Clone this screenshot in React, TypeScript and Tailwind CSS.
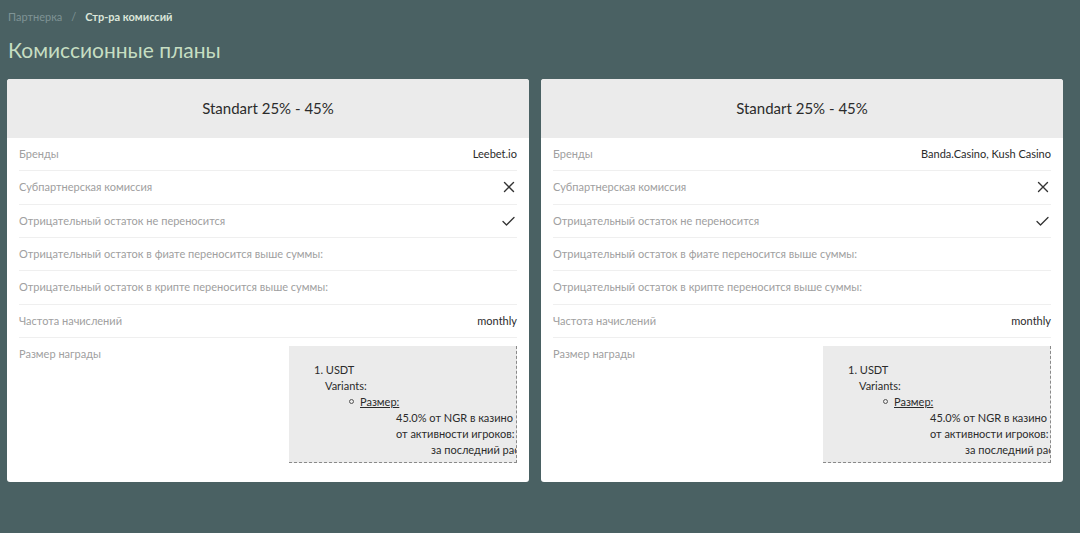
import React from "react";

const rows = (brand: string) => [
  { label: "Бренды", value: <span className="text-[#2b2b2b]">{brand}</span> },
  { label: "Субпартнерская комиссия", value: <XIcon /> },
  { label: "Отрицательный остаток не переносится", value: <CheckIcon /> },
  { label: "Отрицательный остаток в фиате переносится выше суммы:", value: null },
  { label: "Отрицательный остаток в крипте переносится выше суммы:", value: null },
  { label: "Частота начислений", value: <span className="text-[#2b2b2b]">monthly</span> },
];

function XIcon() {
  return (
    <svg width="12" height="12" viewBox="0 0 12 12" className="mr-[2px]">
      <path d="M1.5 1.5 L10.5 10.5 M10.5 1.5 L1.5 10.5" stroke="#333" strokeWidth="1.4" strokeLinecap="round" />
    </svg>
  );
}

function CheckIcon() {
  return (
    <svg width="13" height="10" viewBox="0 0 13 10" className="mr-[2px]">
      <path d="M1 5.5 L4.5 9 L12 1.5" stroke="#333" strokeWidth="1.3" fill="none" strokeLinecap="round" strokeLinejoin="round" />
    </svg>
  );
}

function Card({ brand }: { brand: string }) {
  return (
    <div className="w-[522px] bg-white rounded-[3px] overflow-hidden">
      <div className="h-[59px] bg-[#ebebeb] flex items-center justify-center text-[15px] text-[#2b2b2b]">
        Standart 25% - 45%
      </div>
      <div className="px-[12px]">
        {rows(brand).map((r, i) => (
          <div
            key={i}
            className="h-[33.33px] flex items-center justify-between border-b border-[#efefef] text-[11px]"
          >
            <span className="text-[#a0a0a0]">{r.label}</span>
            {r.value}
          </div>
        ))}
        <div className="flex justify-between items-start pt-[8px] pb-[19px]">
          <span className="text-[11px] text-[#a0a0a0] leading-[16px]">Размер награды</span>
          <div className="w-[228px] h-[117px] bg-[#ebebeb] border-r border-b border-dashed border-[#8a8a8a] overflow-hidden text-[11px] text-[#2b2b2b] leading-[16px] pt-[16px] whitespace-nowrap">
            <div className="pl-[25px]">1. USDT</div>
            <div className="pl-[36px]">Variants:</div>
            <div className="pl-[60px] flex items-center">
              <span className="inline-block w-[5px] h-[5px] rounded-full border border-[#555] mr-[6px]"></span>
              <span className="underline">Размер:</span>
            </div>
            <div className="pl-[107px]">45.0% от NGR в казино</div>
            <div className="pl-[107px]">от активности игроков:</div>
            <div className="pl-[142px]">за последний расчетный период</div>
          </div>
        </div>
      </div>
    </div>
  );
}

export default function App() {
  return (
    <div
      className="w-[1080px] h-[533px] bg-[#4a6163] pl-[7px] pr-[17px] pt-[9px]"
      style={{ fontFamily: "Lato, 'Noto Sans', sans-serif" }}
    >
      <div className="flex items-center text-[11px] pl-[1px] h-[16px]">
        <span className="text-[#7f9395]">Партнерка</span>
        <span className="text-[#7f9395] mx-[9px]">/</span>
        <span className="text-[#dce6da] font-bold">Стр-ра комиссий</span>
      </div>
      <h1 className="text-[21px] text-[#c6dec2] mt-[11px] pl-[1px] leading-[28px]">Комиссионные планы</h1>
      <div className="flex gap-[12px] mt-[15px]">
        <Card brand="Leebet.io" />
        <Card brand="Banda.Casino, Kush Casino" />
      </div>
    </div>
  );
}
